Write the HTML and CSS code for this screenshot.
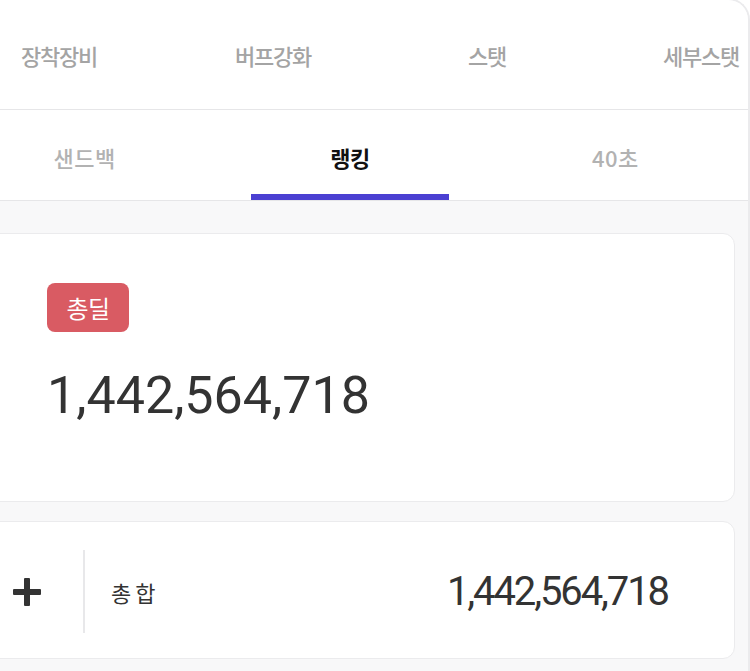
FILE: index.html
```html
<!DOCTYPE html>
<html lang="ko">
<head>
<meta charset="utf-8">
<title>랭킹</title>
<link rel="stylesheet" href="styles.css">
</head>
<body>
<div class="panel">
  <nav class="tabs-top">
    <div class="tab-top">장착장비</div>
    <div class="tab-top">버프강화</div>
    <div class="tab-top">스탯</div>
    <div class="tab-top">세부스탯</div>
  </nav>
  <nav class="tabs-sub">
    <div class="tab-sub"><span class="tab-label">샌드백</span><span class="tab-bar"></span></div>
    <div class="tab-sub active"><span class="tab-label">랭킹</span><span class="tab-bar"></span></div>
    <div class="tab-sub"><span class="tab-label">40초</span><span class="tab-bar"></span></div>
  </nav>
  <main class="content">
    <section class="card card-total">
      <span class="badge">총딜</span>
      <div class="big-number">1,442,564,718</div>
    </section>
    <section class="card card-row">
      <div class="expand">
        <svg width="28" height="28" viewBox="0 0 28 28" aria-hidden="true">
          <rect x="11" y="0" width="6" height="28" rx="1" fill="#333"/>
          <rect x="0" y="11" width="28" height="6" rx="1" fill="#333"/>
        </svg>
      </div>
      <div class="divider"></div>
      <div class="row-label">총합</div>
      <div class="row-value">1,442,564,718</div>
    </section>
  </main>
</div>
</body>
</html>
```
FILE: styles.css
```css
html, body {
  margin: 0;
  padding: 0;
  background: #ffffff;
  height: 100%;
  overflow: hidden;
}

body {
  font-family: "Noto Sans CJK KR", "Noto Sans", sans-serif;
}

.panel {
  margin-left: -48px;
  margin-top: -2px;
  width: 796px;
  min-height: 100vh;
  border-top: 2px solid #ebebed;
  border-right: 2px solid #ebebed;
  border-top-right-radius: 22px;
  overflow: hidden;
  display: flex;
  flex-direction: column;
  background: #f8f8f9;
}

.tabs-top {
  display: flex;
  height: 109px;
  border-bottom: 1px solid #e6e6e8;
  background: #ffffff;
  overflow: hidden;
}

.tab-top {
  flex: 0 0 214px;
  display: flex;
  align-items: center;
  justify-content: center;
  font-size: 22px;
  font-weight: 500;
  letter-spacing: -1.2px;
  color: #a4a4a4;
}

.tabs-sub {
  display: flex;
  height: 90px;
  border-bottom: 1px solid #e6e6e8;
  background: #ffffff;
}

.tab-sub {
  flex: 1;
  display: flex;
  flex-direction: column;
  align-items: center;
}

.tab-label {
  flex: 1;
  display: flex;
  align-items: center;
  padding-top: 10px;
  font-size: 22px;
  font-weight: 500;
  letter-spacing: 0.5px;
  color: #b2b2b2;
}

.tab-bar {
  width: 198px;
  height: 6px;
}

.tab-sub.active .tab-label {
  color: #111111;
  font-weight: 700;
  letter-spacing: -0.5px;
}

.tab-sub.active .tab-bar {
  background: #4b40d2;
}

.content {
  flex: 1;
  padding: 32px 13px 0 13px;
  background: #f8f8f9;
}

.card {
  background: #ffffff;
  border: 1px solid #ebebed;
  border-radius: 12px;
}

.card-total {
  display: flex;
  flex-direction: column;
  align-items: flex-start;
  padding: 49px 0 80px 81px;
}

.badge {
  display: block;
  height: 49px;
  line-height: 49px;
  padding: 0 19.5px;
  background: #d95b63;
  color: #ffffff;
  border-radius: 8px;
  font-size: 24px;
  font-weight: 400;
  letter-spacing: -0.6px;
}

.big-number {
  margin-top: 38px;
  font-family: "Roboto", "Liberation Sans", sans-serif;
  font-size: 52px;
  line-height: 51px;
  font-weight: 400;
  color: #333333;
}

.card-row {
  margin-top: 19px;
  display: flex;
  align-items: center;
  padding: 28px 66px 25px 47px;
}

.expand {
  width: 28px;
  height: 28px;
  display: flex;
}

.divider {
  margin-left: 42px;
  width: 2px;
  height: 83px;
  background: #e8e8ea;
}

.row-label {
  margin-left: 26px;
  font-size: 22px;
  letter-spacing: 4px;
  color: #333333;
}

.row-value {
  margin-left: auto;
  font-family: "Roboto", "Liberation Sans", sans-serif;
  font-size: 40px;
  letter-spacing: -2.1px;
  color: #333333;
}
```
